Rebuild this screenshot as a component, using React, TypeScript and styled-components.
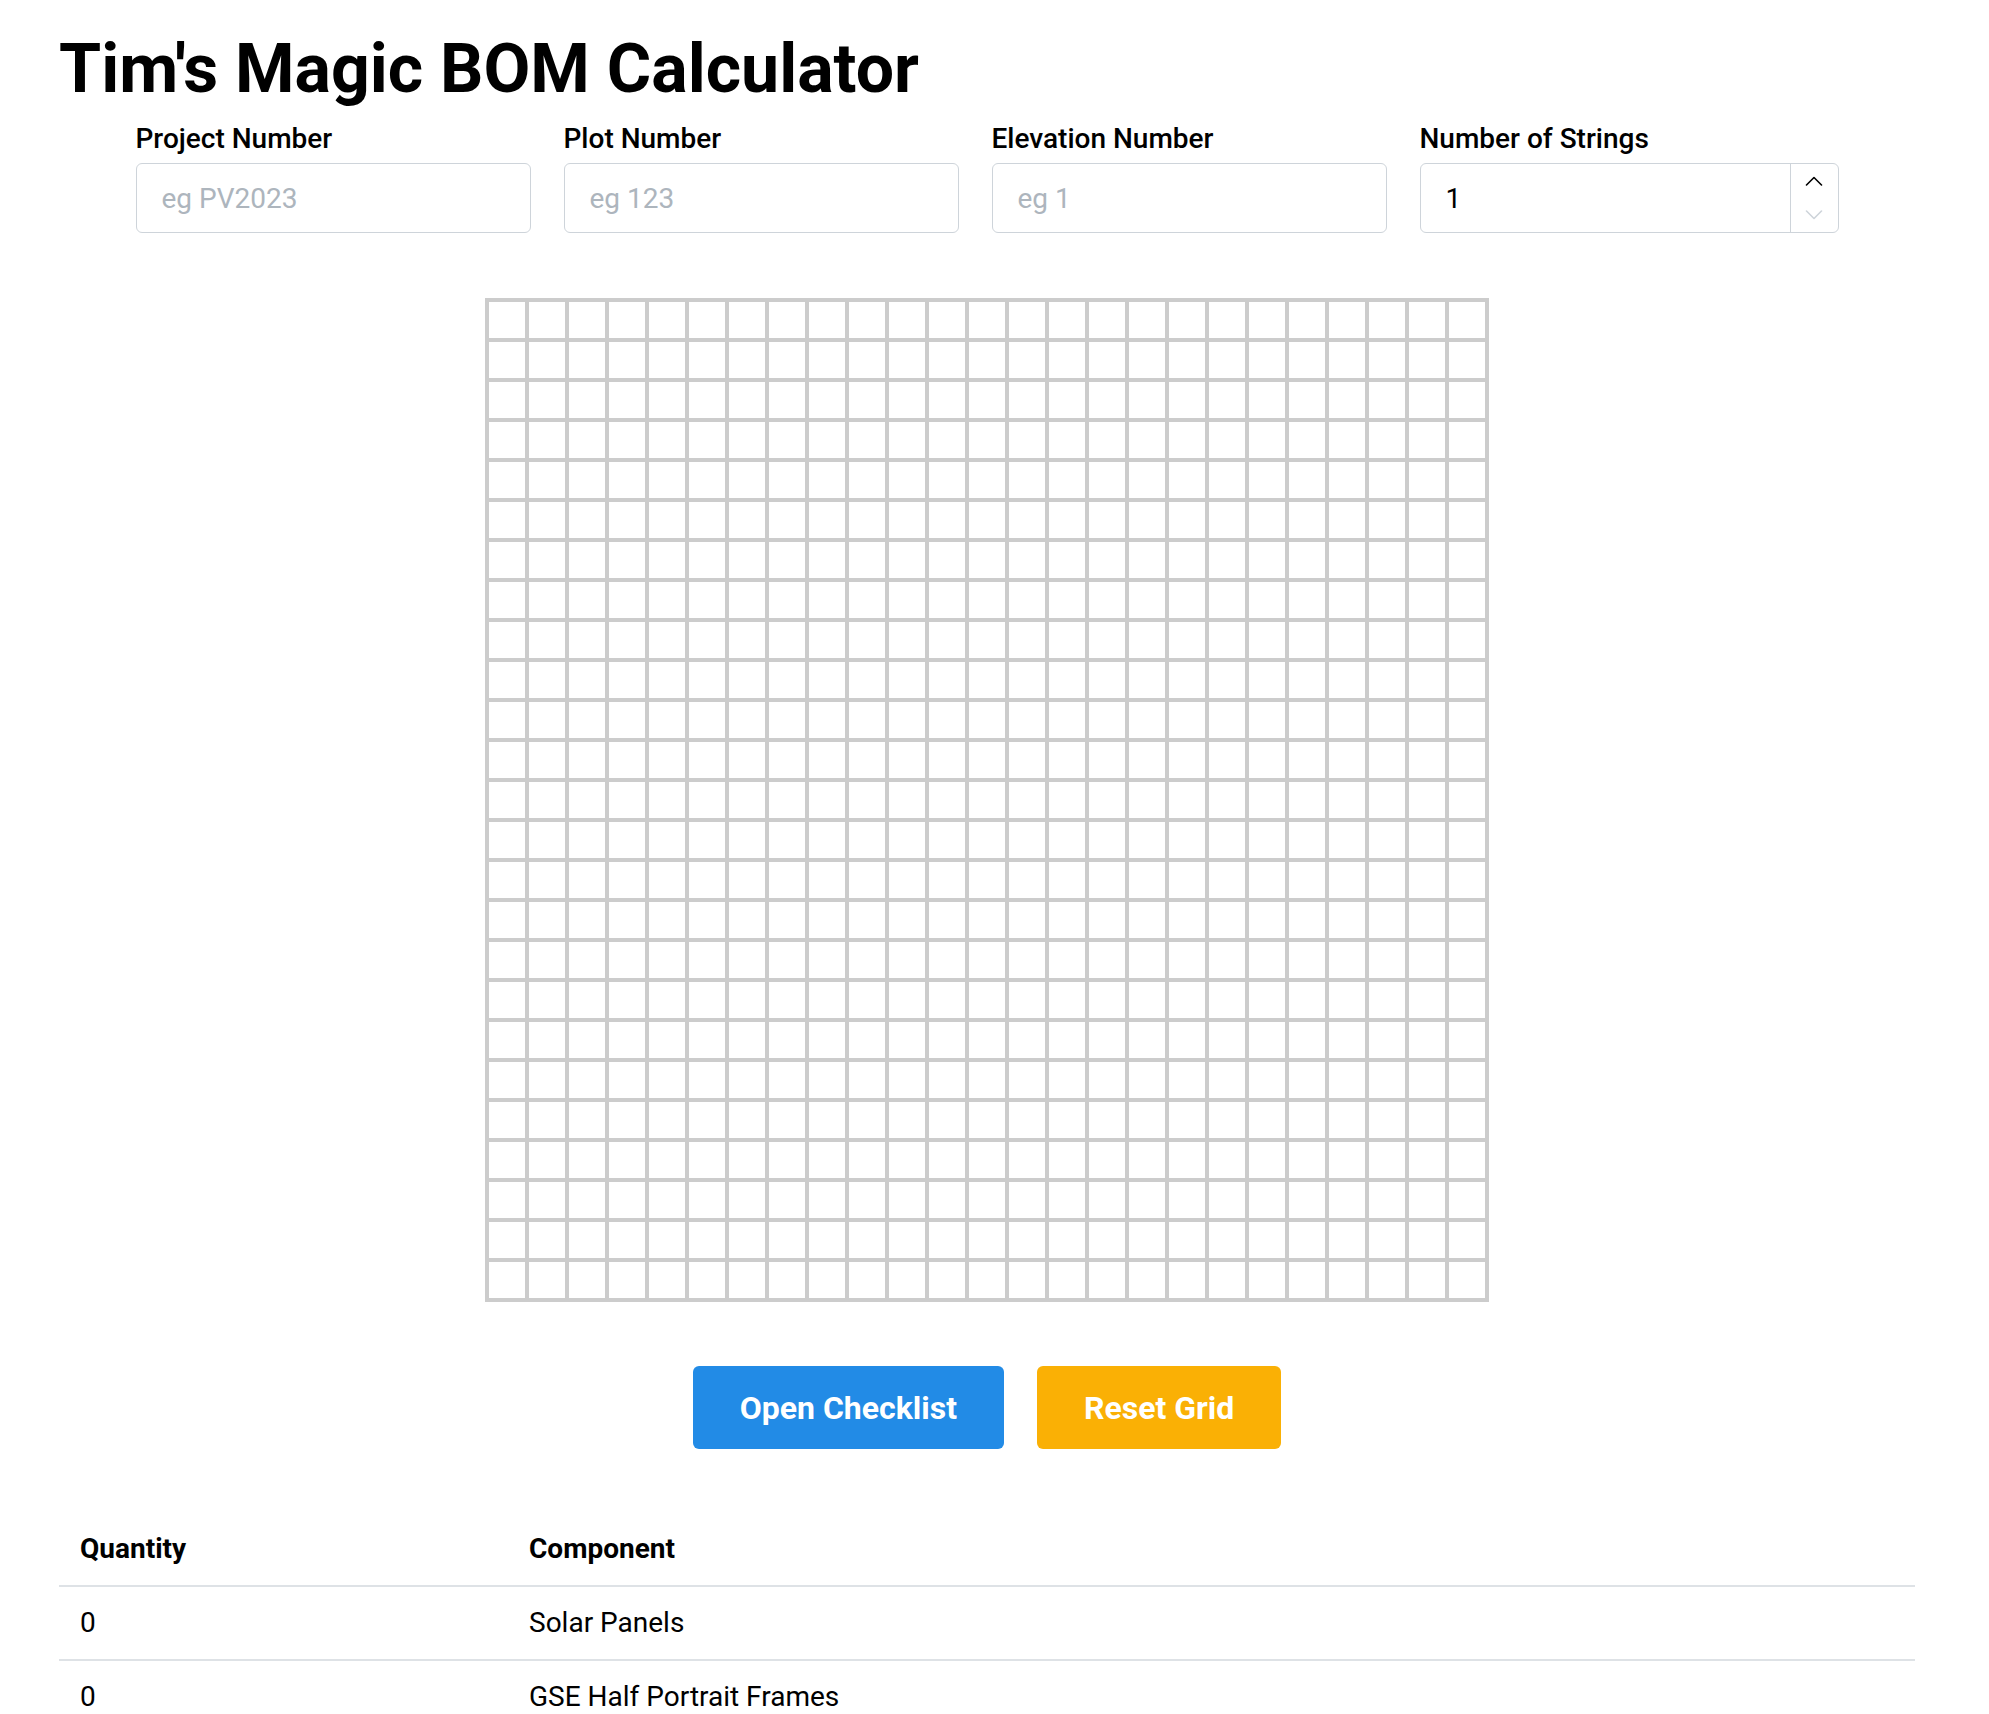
import React, { useState } from 'react';
import styled, { createGlobalStyle } from 'styled-components';

const GRID_SIZE = 25;

const GlobalStyle = createGlobalStyle`
  body {
    margin: 0;
    background: #fff;
    color: #000;
    font-family: Roboto, "Liberation Sans", Arial, sans-serif;
  }
  * {
    box-sizing: border-box;
  }
`;

const Page = styled.main`
  width: 1856px;
  margin-left: 59px;
  display: flex;
  flex-direction: column;
`;

const Title = styled.h1`
  margin: 28px 0 0;
  font-size: 68px;
  line-height: 82px;
  font-weight: 700;
`;

const FieldRow = styled.div`
  margin-top: 13px;
  display: flex;
  justify-content: center;
  gap: 33px;
`;

const Field = styled.label<{ $width: number }>`
  width: ${(p) => p.$width}px;
  display: flex;
  flex-direction: column;
  gap: 8px;
`;

const FieldLabel = styled.span`
  font-size: 28px;
  line-height: 32px;
  font-weight: 500;
`;

const InputBox = styled.div`
  height: 70px;
  display: flex;
  border: 1px solid #ced4da;
  border-radius: 6px;
  background: #fff;
  overflow: hidden;
`;

const TextInput = styled.input`
  flex: 1;
  min-width: 0;
  border: none;
  outline: none;
  padding: 0 25px;
  font-family: inherit;
  font-size: 28px;
  color: #000;
  background: transparent;

  &::placeholder {
    color: #adb5bd;
  }
`;

const Stepper = styled.div`
  width: 48px;
  display: flex;
  flex-direction: column;
  border-left: 1px solid #ced4da;
`;

const StepButton = styled.button<{ $disabled?: boolean }>`
  flex: 1;
  border: none;
  background: transparent;
  padding: 0;
  display: flex;
  align-items: center;
  justify-content: center;
  color: ${(p) => (p.$disabled ? '#ced4da' : '#000')};
  cursor: ${(p) => (p.$disabled ? 'default' : 'pointer')};
`;

const GridBoard = styled.div`
  align-self: center;
  margin-top: 65px;
  display: grid;
  grid-template-columns: repeat(${GRID_SIZE}, 36px);
  grid-auto-rows: 36px;
  gap: 4px;
  padding: 4px;
  background: #ccc;
`;

const Cell = styled.div<{ $on: boolean }>`
  background: ${(p) => (p.$on ? '#228be6' : '#fff')};
`;

const ButtonRow = styled.div`
  margin-top: 64px;
  display: flex;
  justify-content: center;
  gap: 33px;
`;

const ActionButton = styled.button<{ $color: string }>`
  height: 83px;
  padding: 0 47px;
  border: none;
  border-radius: 6px;
  background: ${(p) => p.$color};
  color: #fff;
  font-family: inherit;
  font-size: 32px;
  font-weight: 700;
  cursor: pointer;
`;

const BomTable = styled.table`
  margin-top: 64px;
  width: 100%;
  border-collapse: collapse;
  font-size: 28px;
  line-height: 40px;
  text-align: left;
`;

const HeadCell = styled.th<{ $width?: number }>`
  width: ${(p) => (p.$width ? `${p.$width}px` : 'auto')};
  padding: 16px 21px;
  font-weight: 700;
  border-bottom: 2px solid #dee2e6;
`;

const BodyCell = styled.td`
  padding: 16px 21px;
  font-weight: 400;
  border-bottom: 2px solid #dee2e6;
`;

function Chevron({ up }: { up?: boolean }) {
  return (
    <svg width="18" height="10" viewBox="0 0 18 10" fill="none">
      <polyline
        points={up ? '1.5,9 9,1.5 16.5,9' : '1.5,1 9,8.5 16.5,1'}
        stroke="currentColor"
        strokeWidth="1.6"
        strokeLinecap="round"
        strokeLinejoin="round"
      />
    </svg>
  );
}

const bom = [
  { qty: 0, name: 'Solar Panels' },
  { qty: 0, name: 'GSE Half Portrait Frames' },
];

export default function App() {
  const [strings, setStrings] = useState(1);
  const [cells, setCells] = useState<boolean[]>(() => Array(GRID_SIZE * GRID_SIZE).fill(false));

  const toggle = (i: number) => setCells((c) => c.map((v, j) => (j === i ? !v : v)));

  return (
    <>
      <GlobalStyle />
      <Page>
        <Title>Tim's Magic BOM Calculator</Title>

        <FieldRow>
          <Field $width={395}>
            <FieldLabel>Project Number</FieldLabel>
            <InputBox>
              <TextInput placeholder="eg PV2023" />
            </InputBox>
          </Field>
          <Field $width={395}>
            <FieldLabel>Plot Number</FieldLabel>
            <InputBox>
              <TextInput placeholder="eg 123" />
            </InputBox>
          </Field>
          <Field $width={395}>
            <FieldLabel>Elevation Number</FieldLabel>
            <InputBox>
              <TextInput placeholder="eg 1" />
            </InputBox>
          </Field>
          <Field $width={419}>
            <FieldLabel>Number of Strings</FieldLabel>
            <InputBox>
              <TextInput
                value={strings}
                onChange={(e) => setStrings(Math.max(1, Number(e.target.value) || 1))}
              />
              <Stepper>
                <StepButton type="button" onClick={() => setStrings((s) => s + 1)}>
                  <Chevron up />
                </StepButton>
                <StepButton
                  type="button"
                  $disabled={strings <= 1}
                  onClick={() => setStrings((s) => Math.max(1, s - 1))}
                >
                  <Chevron />
                </StepButton>
              </Stepper>
            </InputBox>
          </Field>
        </FieldRow>

        <GridBoard>
          {cells.map((on, i) => (
            <Cell key={i} $on={on} onClick={() => toggle(i)} />
          ))}
        </GridBoard>

        <ButtonRow>
          <ActionButton $color="#228be6">Open Checklist</ActionButton>
          <ActionButton $color="#fab005" onClick={() => setCells(Array(GRID_SIZE * GRID_SIZE).fill(false))}>
            Reset Grid
          </ActionButton>
        </ButtonRow>

        <BomTable>
          <thead>
            <tr>
              <HeadCell $width={449}>Quantity</HeadCell>
              <HeadCell>Component</HeadCell>
            </tr>
          </thead>
          <tbody>
            {bom.map((row) => (
              <tr key={row.name}>
                <BodyCell>{row.qty}</BodyCell>
                <BodyCell>{row.name}</BodyCell>
              </tr>
            ))}
          </tbody>
        </BomTable>
      </Page>
    </>
  );
}
